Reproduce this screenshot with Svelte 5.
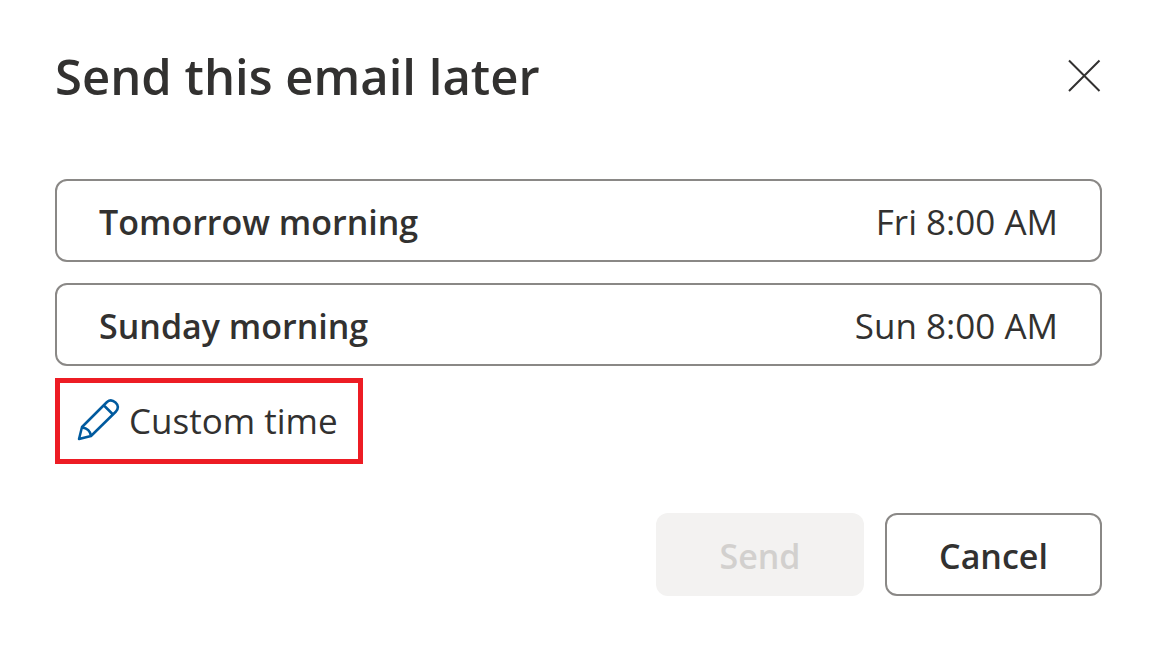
<script>
  const options = [
    { label: 'Tomorrow morning', time: 'Fri 8:00 AM' },
    { label: 'Sunday morning', time: 'Sun 8:00 AM' }
  ];
</script>

<div class="dialog" role="dialog" aria-labelledby="title">
  <header>
    <h1 id="title">Send this email later</h1>
    <button class="close" aria-label="Close">
      <svg width="34" height="34" viewBox="0 0 34 34"><path d="M1 1.500 31.500 32M31.500 1.500 1 32" /></svg>
    </button>
  </header>
  <div class="options">
    {#each options as option}
      <button class="option"><span class="name">{option.label}</span><span>{option.time}</span></button>
    {/each}
  </div>
  <button class="custom">
    <svg width="44" height="44" viewBox="0 0 44 44"><path d="M3 41 6 29 31 4Q35 .5 39.500 4.500T40 13.500L15 38ZM28 7.500 36.500 16M6 29.500Q14 30.500 15 38" /></svg>
    <span>Custom time</span>
  </button>
  <footer>
    <button class="action send" disabled>Send</button>
    <button class="action cancel">Cancel</button>
  </footer>
</div>

<style>
  :global(body) { margin: 0; background: #fff; }
  .dialog { padding: 40px 58px 55px 55px; color: #323130; font-family: "Open Sans", "Noto Sans", sans-serif; }
  button { box-sizing: border-box; margin: 0; font: inherit; color: inherit; background: #fff; cursor: pointer; }
  svg { display: block; flex: none; fill: none; }
  header { display: flex; align-items: center; justify-content: space-between; height: 72px; }
  h1 { margin: 0; font-size: 49px; line-height: 72px; font-weight: 600; }
  .close { padding: 0; border: 0; }
  .close path { stroke: #323130; stroke-width: 2; }
  .options { display: flex; flex-direction: column; gap: 21px; margin-top: 67px; }
  .option { display: flex; align-items: center; justify-content: space-between; width: 100%; height: 83px; padding: 2px 42px 0; border: 2px solid #8a8886; border-radius: 12px; font-size: 35px; }
  .name { font-size: 34px; font-weight: 600; }
  .custom { display: flex; align-items: center; gap: 9px; height: 86px; margin-top: 12px; padding: 0 20px 2px 16px; border: 5px solid #ed1c24; font-size: 35px; }
  .custom path { stroke: #005a9e; stroke-width: 2.5; stroke-linejoin: round; }
  footer { display: flex; justify-content: flex-end; gap: 21px; margin-top: 49px; }
  .action { height: 83px; padding: 2px 20px 0; border-radius: 12px; font-size: 34px; font-weight: 600; }
  .send { width: 208px; border: 0; background: #f3f2f1; color: #d2d0ce; }
  .cancel { width: 217px; border: 2px solid #8a8886; }
</style>
